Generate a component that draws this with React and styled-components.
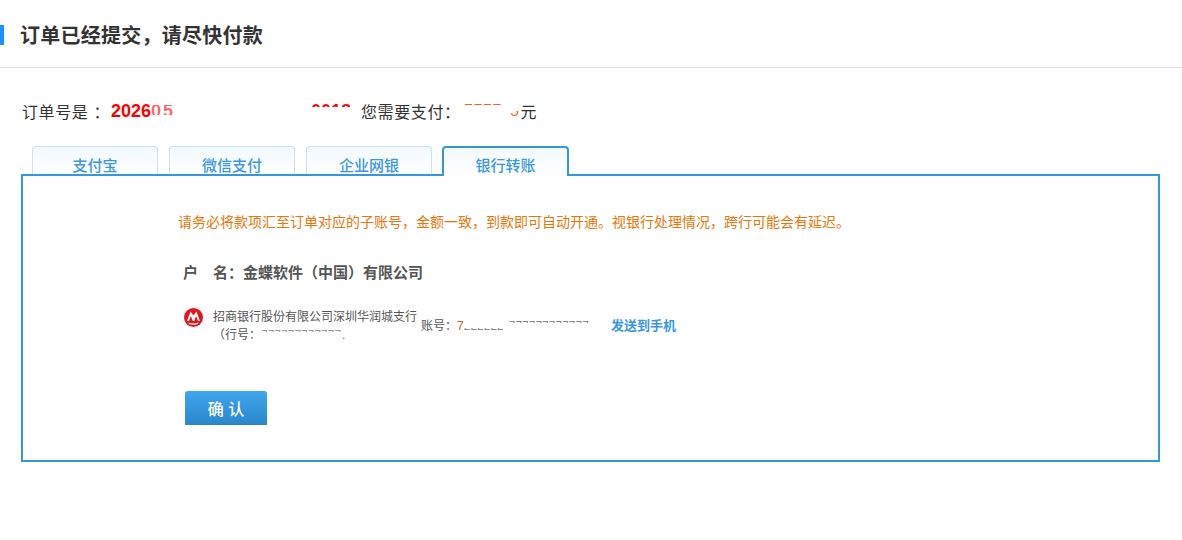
import styled, { createGlobalStyle } from "styled-components";

const GlobalStyle = createGlobalStyle`
    html, body {
        margin: 0;
        padding: 0;
        background: #fff;
        font-family: "Liberation Sans", "Noto Sans CJK SC", sans-serif;
    }
`

const Page = styled.div`
    width: 1182px;
    height: 540px;
    overflow: hidden;
`

const Header = styled.div`
    height: 67px;
    display: flex;
    align-items: center;
    border-bottom: 1px solid #e4e4e4;
`

const Accent = styled.div`
    width: 4px;
    height: 20px;
    margin-top: 3px;
    background: #1e8fff;
`

const Title = styled.h1`
    margin: 5px 0 0 16px;
    font-size: 20px;
    line-height: 24px;
    font-weight: 700;
    letter-spacing: 0.25px;
    color: #333;
`

const Content = styled.div`
    padding: 32px 22px 0 21px;
`

const OrderLine = styled.div`
    display: flex;
    align-items: center;
    height: 22px;
    font-size: 16px;
    letter-spacing: 0.6px;
    color: #333;
`

const OrderLabel = styled.span`
    width: 90px;
    flex: none;
    padding-left: 1px;
    box-sizing: border-box;
`

const OrderNo = styled.span`
    display: flex;
    width: 250px;
    flex: none;
    font-weight: 700;
    font-size: 18px;
    letter-spacing: 0;
    color: #f00;
`

const PayLabel = styled.span`
    width: 103px;
    flex: none;
`

// digits of which only a band is still readable in the picture
const Fragment = styled.span`
    display: inline-block;
    flex: none;
    white-space: nowrap;
    margin-left: ${({ $left }) => $left || 0}px;
    margin-right: ${({ $right }) => $right || 0}px;
    letter-spacing: ${({ $spacing }) => $spacing || 0}px;
    color: transparent;
    background: linear-gradient(
        transparent ${({ $from }) => $from}px,
        ${({ $color }) => $color} ${({ $from }) => $from}px,
        ${({ $color }) => $color} ${({ $to }) => $to}px,
        transparent ${({ $to }) => $to}px
    );
    -webkit-background-clip: text;
    background-clip: text;
`

const Tabs = styled.div`
    display: flex;
    gap: 11px;
    height: 28px;
    margin-top: 24px;
    padding-left: 11px;
`

const Tab = styled.div`
    width: ${({ $active }) => ($active ? "127px" : "126px")};
    box-sizing: border-box;
    height: ${({ $active }) => ($active ? "30px" : "28px")};
    margin-left: ${({ $active }) => ($active ? "-1px" : "0")};
    position: relative;
    z-index: ${({ $active }) => ($active ? 2 : 0)};
    text-align: center;
    font-size: 15px;
    font-weight: 500;
    line-height: ${({ $active }) => ($active ? "35px" : "37px")};
    color: #3a98e0;
    background: linear-gradient(#f2f9fe, #fff);
    border: ${({ $active }) => ($active ? "2px solid #3498db" : "1px solid #c9e2f5")};
    border-bottom: none;
    border-radius: 4px 4px 0 0;
`

const Panel = styled.div`
    box-sizing: border-box;
    height: 288px;
    border: 2px solid #3498db;
    padding: 36px 0 0 155px;
`

const Notice = styled.p`
    margin: 0;
    font-size: 14px;
    line-height: 20px;
    color: #e8760c;
`

const AccountName = styled.div`
    margin: 31px 0 0 5px;
    font-size: 15px;
    line-height: 20px;
    font-weight: 700;
    color: #555;
`

const NameKey = styled.span`
    display: inline-block;
    width: 30px;
`

const BankRow = styled.div`
    display: flex;
    align-items: flex-start;
    margin: 23px 0 0 6px;
    font-size: 12px;
    line-height: 18px;
    color: #555;
`

const BankLogo = styled.svg`
    width: 19px;
    height: 19px;
    flex: none;
    margin: 2px 10px 0 0;
`

const BankName = styled.div`
    width: 208px;
    flex: none;
    padding-top: 2px;
`

const BranchLine = styled.div`
    display: flex;
`

const Account = styled.div`
    display: flex;
    width: 190px;
    flex: none;
    padding-top: 11px;
`

const AccountFirst = styled.span`
    color: #b5651d;
`

const Dot = styled.span`
    margin-left: 1px;
    color: #777;
`

const SendLink = styled.a`
    font-size: 13px;
    font-weight: 700;
    padding-top: 11px;
    color: #3a98e0;
`

const ConfirmButton = styled.button`
    display: block;
    width: 82px;
    height: 34px;
    margin: 47px 0 0 7px;
    padding: 0;
    border: none;
    border-radius: 3px 3px 0 0;
    font-family: inherit;
    font-size: 16px;
    font-weight: 500;
    color: #fff;
    background: linear-gradient(#40a6ee, #2a86ca);
`

const CmbLogo = () => (
    <BankLogo viewBox="0 0 19 19">
        <circle cx="9.5" cy="9.5" r="9.5" fill="#e2141e" />
        <path
            d="M3 13 L6.6 3.5 L9.5 7.5 L12.4 3.5 L16 13 Z"
            fill="#fff"
        />
        <path d="M5 13 L6.9 8 L8.8 13 Z M10.2 13 L12.1 8 L14 13 Z" fill="#e2141e" />
        <path d="M4.5 14.6 Q9.5 16.6 14.5 14.6 L14 16 Q9.5 17.6 5 16 Z" fill="#fff" />
    </BankLogo>
);

const App = () => {
    const tabs = ["支付宝", "微信支付", "企业网银"];

    return (
        <Page>
            <GlobalStyle />
            <Header>
                <Accent />
                <Title>订单已经提交，请尽快付款</Title>
            </Header>
            <Content>
                <OrderLine>
                    <OrderLabel>订单号是 ：</OrderLabel>
                    <OrderNo>
                        2026
                        <Fragment $spacing={2} $from={4} $to={14} $color="#f66">05</Fragment>
                        <Fragment $left={136} $from={3} $to={6} $color="#f00">0018</Fragment>
                    </OrderNo>
                    <PayLabel>您需要支付：</PayLabel>
                    <Fragment $spacing={0.6} $from={1} $to={3.5} $color="#f26522">7777</Fragment>
                    <Fragment $spacing={0.6} $left={8} $right={1} $from={9} $to={18} $color="#f26522">5</Fragment>
                    元
                </OrderLine>
                <Tabs>
                    {tabs.map(name => <Tab key={name}>{name}</Tab>)}
                    <Tab $active>银行转账</Tab>
                </Tabs>
                <Panel>
                    <Notice>请务必将款项汇至订单对应的子账号，金额一致，到款即可自动开通。视银行处理情况，跨行可能会有延迟。</Notice>
                    <AccountName>
                        <NameKey>户</NameKey>名：金蝶软件（中国）有限公司
                    </AccountName>
                    <BankRow>
                        <CmbLogo />
                        <BankName>
                            招商银行股份有限公司深圳华润城支行
                            <BranchLine>
                                （行号：
                                <Fragment $from={4} $to={6} $color="#999">777777777777</Fragment>
                                <Dot>.</Dot>
                            </BranchLine>
                        </BankName>
                        <Account>
                            账号：
                            <AccountFirst>7</AccountFirst>
                            <Fragment $from={11} $to={14} $color="#888">222222</Fragment>
                            <Fragment $left={5} $from={4} $to={6} $color="#888">777777777777</Fragment>
                        </Account>
                        <SendLink>发送到手机</SendLink>
                    </BankRow>
                    <ConfirmButton>确 认</ConfirmButton>
                </Panel>
            </Content>
        </Page>
    );
}

export default App;
